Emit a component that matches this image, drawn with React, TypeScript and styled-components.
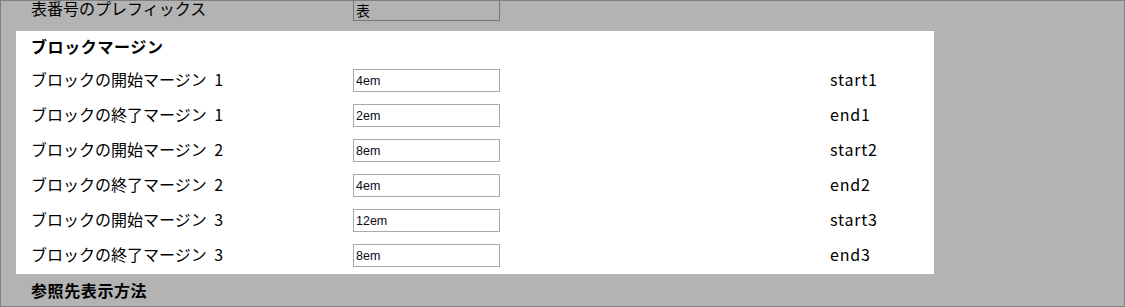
import styled, { createGlobalStyle } from "styled-components";

const GlobalStyle = createGlobalStyle`
  html, body {
    margin: 0;
    padding: 0;
    background: #b3b3b3;
  }
  body {
    font-family: "Noto Sans CJK JP", "Noto Sans", sans-serif;
  }
`;

const Frame = styled.div`
  width: 1125px;
  height: 307px;
  box-sizing: border-box;
  border: 1px solid #808080;
  background: #b3b3b3;
  overflow: hidden;
`;

const Content = styled.div`
  margin-top: -9px;
  display: flex;
  flex-direction: column;
`;

const Row = styled.div`
  display: grid;
  grid-template-columns: 322px 147px 330px 1fr;
  align-items: center;
  height: 35px;
  padding-left: 30px;
  color: #000;
`;

const SectionTitle = styled.div<{ $dark?: boolean }>`
  display: flex;
  align-items: center;
  box-sizing: border-box;
  height: ${({ $dark }) => ($dark ? "35px" : "32px")};
  padding-left: ${({ $dark }) => ($dark ? "30px" : "15px")};
  padding-bottom: 3px;
  font-size: 16px;
  font-weight: 700;
  letter-spacing: 0.6px;
  color: #000;
`;

const Panel = styled.div`
  margin: 4px 190px 0 15px;
  background: #ffffff;
  padding-bottom: 1px;
  & > ${Row} {
    padding-left: 15px;
  }
`;

const Label = styled.span`
  font-size: 16px;
  line-height: 1;
  padding-bottom: 3px;
  word-spacing: 4px;
  white-space: nowrap;
`;

const Field = styled.input<{ $disabled?: boolean }>`
  box-sizing: border-box;
  width: 147px;
  height: 23px;
  margin: 0;
  padding: 0 2px;
  border: 1px solid ${({ $disabled }) => ($disabled ? "#777777" : "#a9a9a9")};
  border-radius: 0;
  background: ${({ $disabled }) => ($disabled ? "#b3b3b3" : "#ffffff")};
  font-family: "Liberation Sans Narrow", "Liberation Sans", Arial, sans-serif;
  font-size: 12.5px;
  color: #0a0a20;
  outline: none;
`;

const TopField = styled(Field)`
  font-family: "Noto Sans CJK JP", sans-serif;
  font-size: 14px;
  color: #000;
`;

const Key = styled.span`
  font-size: 16px;
  line-height: 1;
  padding-bottom: 3px;
  letter-spacing: 0.8px;
`;

const margins = [
  { label: "ブロックの開始マージン 1", value: "4em", key: "start1" },
  { label: "ブロックの終了マージン 1", value: "2em", key: "end1" },
  { label: "ブロックの開始マージン 2", value: "8em", key: "start2" },
  { label: "ブロックの終了マージン 2", value: "4em", key: "end2" },
  { label: "ブロックの開始マージン 3", value: "12em", key: "start3" },
  { label: "ブロックの終了マージン 3", value: "8em", key: "end3" },
];

export default function App() {
  return (
    <>
      <GlobalStyle />
      <Frame>
        <Content>
          <Row>
            <Label>表番号のプレフィックス</Label>
            <TopField $disabled readOnly defaultValue="表" />
          </Row>
          <Panel>
            <SectionTitle>ブロックマージン</SectionTitle>
            {margins.map((m) => (
              <Row key={m.key}>
                <Label>{m.label}</Label>
                <Field readOnly defaultValue={m.value} />
                <span />
                <Key>{m.key}</Key>
              </Row>
            ))}
          </Panel>
          <SectionTitle $dark>参照先表示方法</SectionTitle>
        </Content>
      </Frame>
    </>
  );
}
